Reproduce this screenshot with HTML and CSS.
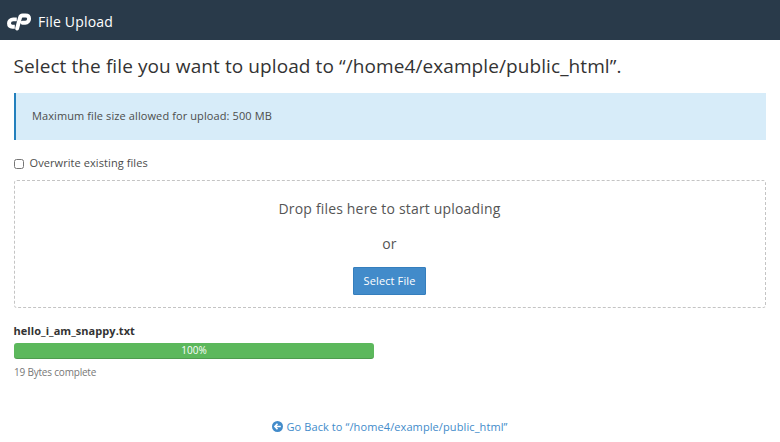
FILE: index.html
```html
<!DOCTYPE html>
<html lang="en">
<head>
<meta charset="utf-8">
<title>File Upload</title>
<link rel="stylesheet" href="styles.css">
</head>
<body>
<header class="topbar">
<svg class="logo" viewBox="0 0 25 18" fill="none" stroke="#fff" stroke-width="3.9" stroke-linejoin="round"><path d="M9.8 6.4H6.2C3.6 6.4 2 8.2 2 10.3s1.4 3.4 3.4 3.4h2.4"/><path d="M10.1 15.6 13 4.7C13.4 3.2 14.2 2.5 15.6 2.5h2.9c2.4 0 3.6 1.3 3.6 3.3s-1.5 4-3.9 4h-2.7" stroke-linecap="round"/></svg>
<span>File Upload</span>
</header>
<main class="content">
<h1 class="title">Select the file you want to upload to “/home4/example/public_html”.</h1>
<div class="callout">Maximum file size allowed for upload: 500 MB</div>
<label class="overwrite"><input type="checkbox" class="check">Overwrite existing files</label>
<section class="dropzone">
<p class="drop-text">Drop files here to start uploading</p>
<p class="drop-text">or</p>
<button class="select" type="button">Select File</button>
</section>
<section class="upload">
<div class="filename">hello_i_am_snappy.txt</div>
<div class="progress">100%</div>
<div class="status">19 Bytes complete</div>
</section>
<a class="back" href="#"><svg class="back-icon" viewBox="0 0 12 12"><circle cx="6" cy="6" r="6" fill="#428bca"/><path d="M6 3 3.2 6 6 9M3.4 6H9.6" fill="none" stroke="#fff" stroke-width="1.8"/></svg><span>Go Back to “/home4/example/public_html”</span></a>
</main>
</body>
</html>
```

FILE: styles.css
```css
* { box-sizing: border-box; }
body { margin: 0; background: #fff; color: #333; font: 11px/16px "Open Sans", sans-serif; }
.topbar { height: 40px; background: #293a4a; color: #fff; display: flex; align-items: center; padding: 3px 7px 0; gap: 6px; font-size: 14px; letter-spacing: 0.2px; }
.logo { width: 25px; height: 18px; }
.content { padding: 13px 14px 0; display: flex; flex-direction: column; }
.title { margin: 0 0 0 -0.5px; font-size: 19px; line-height: 26px; font-weight: 400; letter-spacing: 0.09px; white-space: nowrap; }
.callout { margin-top: 14px; height: 47px; padding: 15px 16px; background: #d7ecf9; border-left: 2px solid #2380bd; color: #4c4c4c; letter-spacing: 0.1px; }
.overwrite { display: flex; align-items: center; gap: 5.5px; margin-top: 15px; color: #4c4c4c; letter-spacing: 0.08px; }
.check { width: 10px; height: 10px; margin: 1px 0 0; }
.dropzone { margin-top: 9px; height: 128px; border: 1px dashed #c4c4c4; border-radius: 3px; display: flex; flex-direction: column; align-items: center; padding: 18px 1px 0 0; }
.drop-text { margin: 0 0 15px; font-size: 14px; line-height: 20px; color: #555; letter-spacing: 0.17px; }
.select { margin-top: -2px; width: 73px; height: 28px; padding: 0; border: 1px solid #357ebd; border-radius: 1px; background: #428bca; color: #fff; font: inherit; letter-spacing: 0.12px; }
.upload { margin-top: 15px; width: 360px; }
.filename { font-weight: 700; letter-spacing: 0.06px; margin-left: -0.5px; }
.progress { margin-top: 4px; height: 16px; border-radius: 3px; background: #5cb85c; box-shadow: inset 0 -1px 0 rgba(0, 0, 0, 0.15); color: #fff; text-align: center; font-size: 10px; line-height: 15px; }
.status { margin-top: 5px; color: #777; font-size: 10px; letter-spacing: -0.2px; }
.back { margin: 39px 0 0; display: flex; justify-content: center; align-items: center; gap: 3px; color: #428bca; text-decoration: none; letter-spacing: 0.1px; }
.back-icon { width: 11px; height: 11px; margin-top: -1px; }
```
